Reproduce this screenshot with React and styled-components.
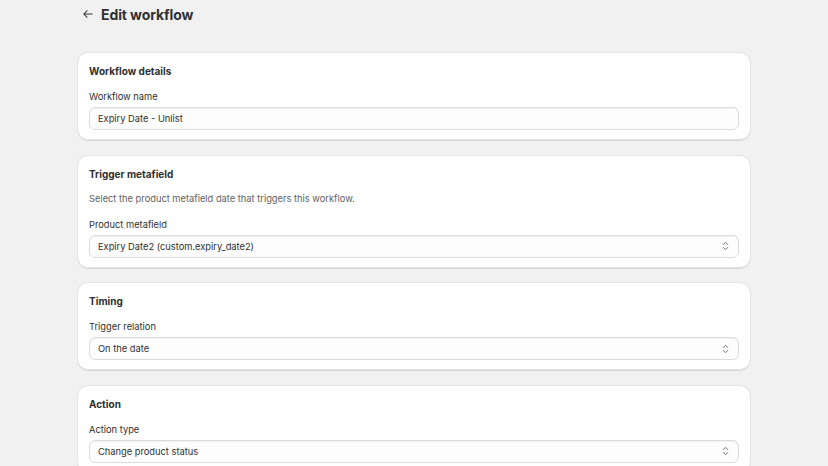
import React from "react";
import styled, { createGlobalStyle } from "styled-components";

const GlobalStyle = createGlobalStyle`
  html, body {
    margin: 0;
    padding: 0;
    background: #f1f1f1;
    font-family: Inter, "Noto Sans", sans-serif;
    color: #303030;
  }
  * { box-sizing: border-box; }
`;

const StPage = styled.main`
  width: 672px;
  margin-left: 78px;
  display: flex;
  flex-direction: column;
`;

const StHeader = styled.header`
  height: 28px;
  display: flex;
  align-items: center;
  gap: 7px;
  padding-left: 3px;
  margin-bottom: 25px;
`;

const StBackButton = styled.button`
  width: 13px;
  height: 14px;
  padding: 0;
  border: none;
  background: none;
  display: flex;
  align-items: center;
  justify-content: center;
  color: #303030;
  cursor: pointer;
`;

const StTitle = styled.h1`
  margin: 0;
  font-size: 14px;
  font-weight: 700;
  letter-spacing: -0.1px;
  color: #303030;
`;

const StCards = styled.div`
  display: flex;
  flex-direction: column;
  gap: 15.5px;
`;

const StCard = styled.section`
  background: #ffffff;
  border-radius: 10px;
  padding: 12px 11px 10px;
  box-shadow: 0 1px 0 0 rgba(26, 26, 26, 0.07), 0 0 0 1px rgba(26, 26, 26, 0.05),
    inset 0 -1px 0 0 #e3e3e3;
  display: flex;
  flex-direction: column;
`;

const StCardTitle = styled.h2`
  margin: 0;
  font-size: 10px;
  line-height: 12px;
  font-weight: 650;
  color: #303030;
`;

const StDescription = styled.p`
  margin: 12px 0 0;
  font-size: 9.3px;
  line-height: 13px;
  color: #616161;
`;

const StField = styled.div`
  margin-top: 13px;
  display: flex;
  flex-direction: column;
  gap: 4px;
`;

const StLabel = styled.label`
  font-size: 9.3px;
  line-height: 13px;
  color: #303030;
`;

const StInputBox = styled.div`
  height: 23px;
  border: 1px solid #dcdcdc;
  border-radius: 6px;
  background: #fdfdfd;
  padding: 0 9px 0 8px;
  display: flex;
  align-items: center;
  justify-content: space-between;
  font-size: 9.3px;
  color: #303030;
  box-shadow: inset 0 1px 0 0 #f0f0f0;
`;

const StValue = styled.span`
  white-space: nowrap;
`;

const BackArrow = () => (
  <svg width="12" height="12" viewBox="0 0 20 20" fill="none">
    <path
      d="M17 10H3.5M8.5 4.5L3 10l5.5 5.5"
      stroke="currentColor"
      strokeWidth="1.7"
      strokeLinecap="round"
      strokeLinejoin="round"
    />
  </svg>
);

const SelectIcon = () => (
  <svg width="7" height="10" viewBox="0 0 7 10" fill="none">
    <path
      d="M1.2 3.6L3.5 1.3l2.3 2.3M1.2 6.4l2.3 2.3 2.3-2.3"
      stroke="#6e6e6e"
      strokeWidth="1"
      strokeLinecap="round"
      strokeLinejoin="round"
    />
  </svg>
);

const Field = ({ label, value, select }) => (
  <StField>
    <StLabel>{label}</StLabel>
    <StInputBox>
      <StValue>{value}</StValue>
      {select && <SelectIcon />}
    </StInputBox>
  </StField>
);

const App = () => {
  return (
    <>
      <GlobalStyle />
      <StPage>
        <StHeader>
          <StBackButton aria-label="Back">
            <BackArrow />
          </StBackButton>
          <StTitle>Edit workflow</StTitle>
        </StHeader>
        <StCards>
          <StCard>
            <StCardTitle>Workflow details</StCardTitle>
            <Field label="Workflow name" value="Expiry Date - Unlist" />
          </StCard>
          <StCard>
            <StCardTitle>Trigger metafield</StCardTitle>
            <StDescription>
              Select the product metafield date that triggers this workflow.
            </StDescription>
            <Field
              label="Product metafield"
              value="Expiry Date2 (custom.expiry_date2)"
              select
            />
          </StCard>
          <StCard>
            <StCardTitle>Timing</StCardTitle>
            <Field label="Trigger relation" value="On the date" select />
          </StCard>
          <StCard>
            <StCardTitle>Action</StCardTitle>
            <Field label="Action type" value="Change product status" select />
          </StCard>
        </StCards>
      </StPage>
    </>
  );
};

export default App;
